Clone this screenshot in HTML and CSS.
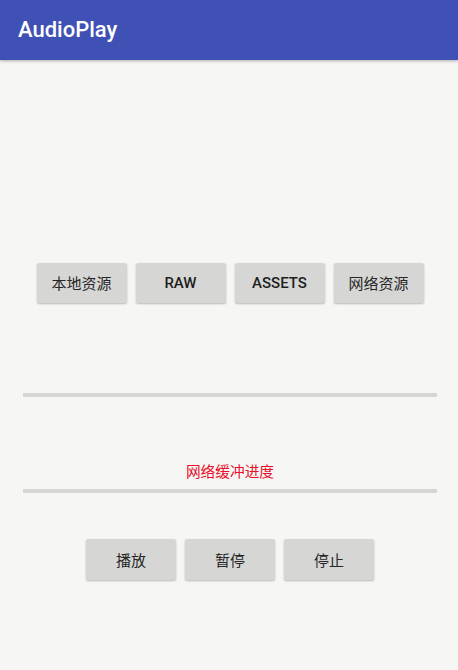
FILE: index.html
```html
<!DOCTYPE html>
<html>
<head>
<meta charset="utf-8">
<link rel="stylesheet" href="styles.css">
</head>
<body>
<header class="appbar"><span class="title">AudioPlay</span></header>
<main class="content">
  <div class="row row-top">
    <button class="btn btn-cjk">本地资源</button>
    <button class="btn">RAW</button>
    <button class="btn">ASSETS</button>
    <button class="btn btn-cjk">网络资源</button>
  </div>
  <div class="bar bar-one"></div>
  <div class="buffer-label">网络缓冲进度</div>
  <div class="bar bar-two"></div>
  <div class="row row-bottom">
    <button class="btn btn-cjk btn-tall">播放</button>
    <button class="btn btn-cjk btn-tall">暂停</button>
    <button class="btn btn-cjk btn-tall">停止</button>
  </div>
</main>
</body>
</html>
```
FILE: styles.css
```css
html, body {
  margin: 0;
  padding: 0;
}
body {
  width: 458px;
  height: 670px;
  background: #f6f7f5;
  font-family: Roboto, "Noto Sans CJK SC", sans-serif;
  overflow: hidden;
}
.appbar {
  height: 60px;
  background: #3f51b5;
  box-shadow: 0 1px 3px rgba(0,0,0,0.3);
  display: flex;
  align-items: center;
  padding-left: 18px;
  position: relative;
  z-index: 1;
}
.title {
  color: #fff;
  font-size: 22px;
  font-weight: 500;
  margin-top: -1px;
}
.content {
  display: flex;
  flex-direction: column;
  align-items: center;
}
.row {
  display: flex;
  align-items: flex-start;
  gap: 9px;
}
.row-top {
  margin-top: 203px;
  padding-left: 2px;
}
.row-bottom {
  margin-top: 46px;
  padding-left: 2px;
}
.btn {
  width: 90px;
  height: 40px;
  border: none;
  border-radius: 2px;
  background: #d6d7d5;
  box-shadow: 0 1px 2px rgba(0,0,0,0.25);
  font-family: Roboto, "Noto Sans CJK SC", sans-serif;
  font-size: 15px;
  line-height: 18px;
  font-weight: 500;
  color: #1e1e1e;
  padding: 0;
  display: flex;
  align-items: center;
  justify-content: center;
}
.btn-cjk {
  font-family: "Noto Sans CJK SC", sans-serif;
  font-weight: 400;
  color: #262626;
}
.btn-tall {
  height: 41px;
}
.bar {
  width: 414px;
  height: 4px;
  background: #d6d7d5;
  margin-left: 2px;
}
.bar-one {
  margin-top: 90px;
}
.buffer-label {
  margin-top: 64px;
  font-family: "Noto Sans CJK SC", sans-serif;
  font-size: 14.7px;
  line-height: 20px;
  color: #e8102a;
  margin-left: 2px;
}
.bar-two {
  margin-top: 8px;
}
```
